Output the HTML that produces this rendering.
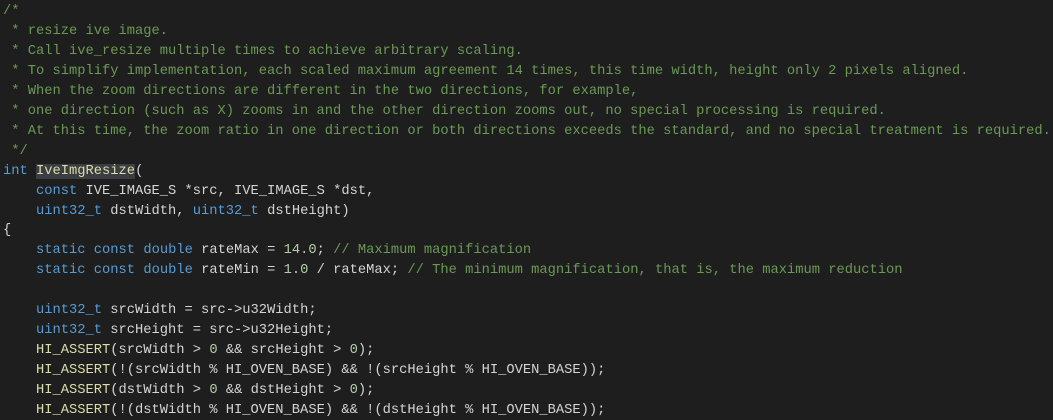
<!DOCTYPE html>
<html><head><style>
html,body{margin:0;padding:0;background:#1e1e1e;width:1053px;height:420px;overflow:hidden}
pre{margin:0;padding:2px 0 0 3px;font-family:"Liberation Mono",monospace;font-size:13.75px;line-height:19.95px;color:#d4d4d4;white-space:pre}
.c{color:#6a9955}.k{color:#569cd6}.f{color:#dcdcaa}.n{color:#b5cea8}.h{background:#3a3d41}
</style></head><body><pre><span class="c">/*
 * resize ive image.
 * Call ive_resize multiple times to achieve arbitrary scaling.
 * To simplify implementation, each scaled maximum agreement 14 times, this time width, height only 2 pixels aligned.
 * When the zoom directions are different in the two directions, for example,
 * one direction (such as X) zooms in and the other direction zooms out, no special processing is required.
 * At this time, the zoom ratio in one direction or both directions exceeds the standard, and no special treatment is required.
 */</span>
<span class="k">int</span> <span class="f h">IveImgResize</span>(
    <span class="k">const</span> IVE_IMAGE_S *src, IVE_IMAGE_S *dst,
    <span class="k">uint32_t</span> dstWidth, <span class="k">uint32_t</span> dstHeight)
{
    <span class="k">static</span> <span class="k">const</span> <span class="k">double</span> rateMax = <span class="n">14.0</span>; <span class="c">// Maximum magnification</span>
    <span class="k">static</span> <span class="k">const</span> <span class="k">double</span> rateMin = <span class="n">1.0</span> / rateMax; <span class="c">// The minimum magnification, that is, the maximum reduction</span>

    <span class="k">uint32_t</span> srcWidth = src-&gt;u32Width;
    <span class="k">uint32_t</span> srcHeight = src-&gt;u32Height;
    <span class="f">HI_ASSERT</span>(srcWidth &gt; <span class="n">0</span> &amp;&amp; srcHeight &gt; <span class="n">0</span>);
    <span class="f">HI_ASSERT</span>(!(srcWidth % HI_OVEN_BASE) &amp;&amp; !(srcHeight % HI_OVEN_BASE));
    <span class="f">HI_ASSERT</span>(dstWidth &gt; <span class="n">0</span> &amp;&amp; dstHeight &gt; <span class="n">0</span>);
    <span class="f">HI_ASSERT</span>(!(dstWidth % HI_OVEN_BASE) &amp;&amp; !(dstHeight % HI_OVEN_BASE));
</pre></body></html>
